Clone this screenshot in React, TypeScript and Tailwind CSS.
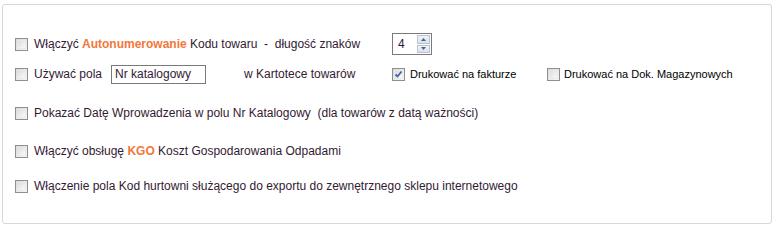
import React from 'react';

const font = { fontFamily: '"Liberation Sans", Arial, sans-serif' };

function Box({ checked = false }: { checked?: boolean }) {
  return (
    <span className="relative inline-block w-[13px] h-[13px] shrink-0 border border-[#8e8f8f] bg-linear-to-br from-[#d8d8d8] to-[#f8f8f8]">
      <span className="absolute inset-[1px] border border-[#e8e8e8] bg-linear-to-br from-[#dcdcdc] to-[#fbfbfb]" />
      {checked && (
        <svg className="absolute left-[1px] top-[1px]" width="9" height="9" viewBox="0 0 9 9">
          <path d="M1.5 4.5 L3.5 6.5 L7.5 1.5" fill="none" stroke="#4b5fa0" strokeWidth="1.8" />
        </svg>
      )}
    </span>
  );
}

function Spinner() {
  return (
    <div className="flex w-[40px] h-[22px] border border-[#7a7a7a] bg-white">
      <span className="flex-1 pl-[5px] text-[12px] leading-[20px] text-[#331a33]">4</span>
      <div className="flex flex-col gap-[1px] w-[13px] my-[1px] mr-[1px]">
        <div className="flex-1 flex items-center justify-center border border-[#b9c4d3] bg-linear-to-b from-[#f2f5f9] to-[#d9e1ec]">
          <svg width="5" height="3" viewBox="0 0 5 3"><path d="M0 3 L2.5 0 L5 3 Z" fill="#4d6185" /></svg>
        </div>
        <div className="flex-1 flex items-center justify-center border border-[#b9c4d3] bg-linear-to-b from-[#f2f5f9] to-[#d9e1ec]">
          <svg width="5" height="3" viewBox="0 0 5 3"><path d="M0 0 L2.5 3 L5 0 Z" fill="#4d6185" /></svg>
        </div>
      </div>
    </div>
  );
}

function Row({ className = '', children }: { className?: string; children: React.ReactNode }) {
  return <div className={`flex items-center h-[22px] pl-[12px] ${className}`}>{children}</div>;
}

export default function App() {
  return (
    <div className="w-[780px] h-[240px] bg-white pt-[4px] pl-[2px]" style={font}>
      <div className="w-[770px] h-[220px] border border-[#d3d8dc] rounded-[3px] pt-[28px] text-[12px] text-[#331a33]">
        <Row>
          <Box />
          <span className="w-[358px] ml-[6px]">
            Włączyć <b className="text-[#f3763b]">Autonumerowanie</b> Kodu towaru&nbsp; -&nbsp; długość znaków
          </span>
          <Spinner />
        </Row>

        <Row className="mt-[8px]">
          <Box />
          <span className="w-[77px] ml-[6px]">Używać pola</span>
          <div className="w-[95px] h-[19px] border border-[#7a7a7a] pl-[3px] leading-[17px]">Nr katalogowy</div>
          <span className="w-[148px] ml-[38px]">w Kartotece towarów</span>
          <Box checked />
          <span className="w-[137px] ml-[5px] text-[11px] text-black">Drukować na fakturze</span>
          <Box />
          <span className="ml-[4px] text-[11px] text-black">Drukować na Dok. Magazynowych</span>
        </Row>

        <Row className="mt-[17px]">
          <Box />
          <span className="ml-[6px]">Pokazać Datę Wprowadzenia w polu Nr Katalogowy&nbsp; (dla towarów z datą ważności)</span>
        </Row>

        <Row className="mt-[16px]">
          <Box />
          <span className="ml-[6px]">
            Włączyć obsługę <b className="text-[#f3763b]">KGO</b> Koszt Gospodarowania Odpadami
          </span>
        </Row>

        <Row className="mt-[13px]">
          <Box />
          <span className="ml-[6px]">Włączenie pola Kod hurtowni służącego do exportu do zewnętrznego sklepu internetowego</span>
        </Row>
      </div>
    </div>
  );
}
